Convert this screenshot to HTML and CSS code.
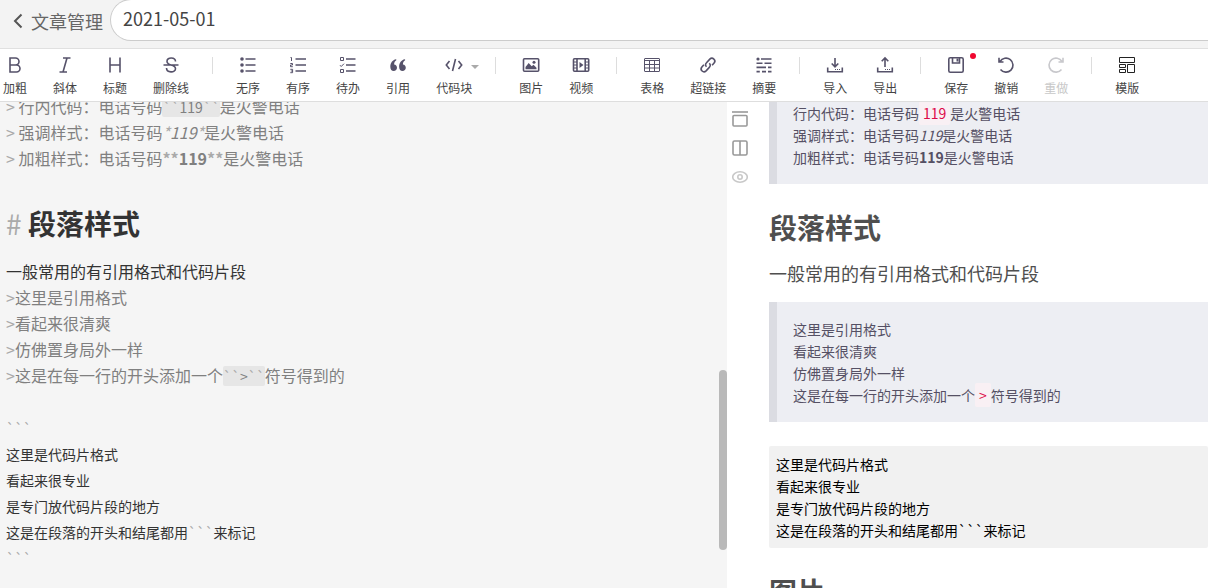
FILE: index.html
```html
<!DOCTYPE html>
<html lang="zh-CN">
<head>
<meta charset="utf-8">
<title>2021-05-01</title>
<link rel="stylesheet" href="styles.css">
</head>
<body>
<header class="topbar">
  <a class="back" href="#"><svg class="back-icon" viewBox="0 0 10 16"><path d="M8.500 1.500 2 8l6.500 6.500"/></svg>文章管理</a>
  <input class="title-input" type="text" value="2021-05-01" aria-label="文章标题">
</header>

<nav class="toolbar">
  <button class="tool"><svg class="icon" viewBox="0 0 20 20"><path d="M5 3v14h6.500a3.500 3.500 0 0 0 0-7H5h5.500a3.500 3.500 0 0 0 0-7z"/></svg>加粗</button>
  <button class="tool"><svg class="icon" viewBox="0 0 20 20"><path d="M8 3h7.500M4.500 17H12M12 3 8 17"/></svg>斜体</button>
  <button class="tool"><svg class="icon" viewBox="0 0 20 20"><path d="M5 2.500v15M15 2.500v15M5 10h10"/></svg>标题</button>
  <button class="tool"><svg class="icon" viewBox="0 0 20 20"><path d="M2.500 10h15M14.500 6.500C14.500 1.800 6 1.800 6 6.200 6 8.500 8 9.300 10 10c2.500.7 4.500 1.500 4.500 3.700 0 4.400-9 4.400-9-.7"/></svg>删除线</button>
  <span class="divider"></span>
  <button class="tool"><svg class="icon" viewBox="0 0 20 20"><path d="M7.500 4H17.500M7.500 10H17.500M7.500 16H17.500"/><g class="solid"><circle cx="4" cy="4" r="1.800"/><circle cx="4" cy="10" r="1.800"/><circle cx="4" cy="16" r="1.800"/></g></svg>无序</button>
  <button class="tool"><svg class="icon" viewBox="0 0 20 20"><path d="M7.500 4H18M7.500 10H18M7.500 16H18"/><path class="fine" d="M2.500 2.500h1V6M2.300 8.500h2.200V10H2.500v1.700h2.300M2.300 14.300h2.300v3.400H2.300M2.800 16h1.800"/></svg>有序</button>
  <button class="tool"><svg class="icon" viewBox="0 0 20 20"><path d="M8 4h9.500M8 10h9.500M8 16h9.500"/><path class="fine" d="M2.500 2.500h3v3h-3zM2.500 14.500h3v3h-3zM2 10.200l1.200 1.300L6 8.700"/></svg>待办</button>
  <button class="tool"><svg class="icon" viewBox="0 0 20 20"><path class="solid" d="M8 4.200C4.500 4.800 2.300 8 2.300 11.700c0 2.700 1.400 4.300 3.400 4.300 1.900 0 3.300-1.400 3.300-3.300 0-1.800-1.200-3.100-2.900-3.200C6.200 7.200 6.900 6.200 8.500 5zM16.800 4.200c-3.500.6-5.700 3.800-5.700 7.500 0 2.700 1.400 4.300 3.400 4.300 1.900 0 3.300-1.400 3.300-3.300 0-1.800-1.200-3.100-2.900-3.200.1-2.300.8-3.300 2.400-4.500z"/></svg>引用</button>
  <button class="tool"><svg class="icon" viewBox="0 0 20 20"><path d="M5.500 6 2.300 10l3.200 4M14.500 6l3.200 4-3.200 4M11.500 4l-3 12"/></svg>代码块<svg class="caret" viewBox="0 0 8 4"><path d="M0 0h8L4 4z"/></svg></button>
  <span class="divider"></span>
  <button class="tool"><svg class="icon" viewBox="0 0 20 20"><rect x="2.500" y="3.700" width="15.200" height="12.600" rx="1"/><path class="solid" d="M4.500 14.300V12l3.200-4 3 3.300 1.800-1.500 3 3v1.500z"/><circle class="solid" cx="13" cy="7.300" r="1.500"/></svg>图片</button>
  <button class="tool"><svg class="icon" viewBox="0 0 20 20"><rect x="2.500" y="3.700" width="15.200" height="12.600" rx="1"/><path d="M6 4v12M14.200 4v12"/><path class="fine" d="M2.500 7H6M2.500 10H6M2.500 13H6M14.200 7h3.500M14.200 10h3.500M14.200 13h3.500"/><path class="solid" d="M8.500 7v6l4-3z"/></svg>视频</button>
  <span class="divider"></span>
  <button class="tool"><svg class="icon" viewBox="0 0 20 20"><path class="fine" d="M3 3.500h14q.5 0 .5.500v12q0 .5-.5.500H3q-.5 0-.5-.5V4q0-.5.500-.500zM2.500 5.500h15M2.500 9.500h15M2.500 13h15M7.500 5.500v11M12.500 5.500v11"/></svg>表格</button>
  <button class="tool"><svg class="icon" viewBox="0 0 20 20"><path d="M8.500 11.800c-1.300-1.300-1.300-2.800 0-4.100l3.300-3.600c2.700-2.500 6.700 1.100 4.300 3.900l-2 2.300M11.300 8.300c1.300 1.300 1.300 2.800 0 4.100l-3.200 3.500c-2.700 2.500-6.600-1-4.200-3.900l2-2.300"/></svg>超链接</button>
  <button class="tool"><svg class="icon" viewBox="0 0 20 20"><path d="M7 4h10.500M2.500 8.200h6M10.500 8.200h7M2.500 12.400h9.500M14 12.400h3.500M2.500 16.600h3.300M8 16.600h4M14 16.600h3.500"/><circle class="solid" cx="4" cy="4" r="1.600"/></svg>摘要</button>
  <span class="divider"></span>
  <button class="tool"><svg class="icon" viewBox="0 0 20 20"><path d="M10 3v8.500M6.700 8.500 10 11.800l3.300-3.300M2.700 12.500v4.200h14.600v-4.200"/><path class="fine" d="M10 14.500h1M12 14.500h1M14 14.500h1"/></svg>导入</button>
  <button class="tool"><svg class="icon" viewBox="0 0 20 20"><path d="M10 12V3M6.700 6.300 10 3l3.300 3.300M2.700 12.500v4.200h14.600v-4.200"/><path class="fine" d="M10 14.500h1M12 14.500h1M14 14.500h1"/></svg>导出</button>
  <span class="divider"></span>
  <button class="tool"><svg class="icon" viewBox="0 0 20 20"><rect x="2.800" y="2.800" width="14.400" height="14.400" rx="1.500"/><path d="M6.500 3v5h7V3"/><path class="solid" d="M10.500 3.500h2v3h-2z"/></svg>保存<span class="unsaved"></span></button>
  <button class="tool"><svg class="icon" viewBox="0 0 20 20"><path d="M4 6.500a7 7 0 1 1 .5 8M3 2.800V7h4.500"/></svg>撤销</button>
  <button class="tool" disabled><svg class="icon" viewBox="0 0 20 20"><path d="M16 6.500a7 7 0 1 0-.5 8M17 2.800V7h-4.500"/></svg>重做</button>
  <span class="divider"></span>
  <button class="tool"><svg class="icon template" viewBox="0 0 20 20"><path d="M2.500 2.500h15v5h-15zM2.500 9.500h6v3h-6zM2.500 14.500h6v3h-6zM10.500 9.500h7v8h-7z"/></svg>模版</button>
</nav>

<main class="workspace">
  <section class="editor">
    <div class="source" contenteditable="true" spellcheck="false">
      <div class="line quote"><i class="mark">&gt;</i> 行内代码：电话号码<code class="source-code"><i class="mark">``</i>119<i class="mark">``</i></code>是火警电话</div>
      <div class="line quote"><i class="mark">&gt;</i> 强调样式：电话号码<em><i class="mark">*</i>119<i class="mark">*</i></em>是火警电话</div>
      <div class="line quote"><i class="mark">&gt;</i> 加粗样式：电话号码<strong><i class="mark">**</i>119<i class="mark">**</i></strong>是火警电话</div>
      <div class="line"></div>
      <div class="line source-heading"><i class="mark">#</i> 段落样式</div>
      <div class="line">一般常用的有引用格式和代码片段</div>
      <div class="line quote"><i class="mark">&gt;</i>这里是引用格式</div>
      <div class="line quote"><i class="mark">&gt;</i>看起来很清爽</div>
      <div class="line quote"><i class="mark">&gt;</i>仿佛置身局外一样</div>
      <div class="line quote"><i class="mark">&gt;</i>这是在每一行的开头添加一个<code class="source-code"><i class="mark">``</i>&gt;<i class="mark">``</i></code>符号得到的</div>
      <div class="line"></div>
      <div class="fence">
        <div class="line"><i class="mark">```</i></div>
        <div class="line">这里是代码片格式</div>
        <div class="line">看起来很专业</div>
        <div class="line">是专门放代码片段的地方</div>
        <div class="line">这是在段落的开头和结尾都用<i class="mark">```</i>来标记</div>
        <div class="line"><i class="mark">```</i></div>
      </div>
    </div>
    <span class="scroll-thumb"></span>
  </section>
  <aside class="view-modes">
    <button class="mode" aria-label="目录"><svg viewBox="0 0 16 16"><path d="M0 1h16"/><rect x="1" y="4.500" width="14" height="10.500" rx="1"/></svg></button>
    <button class="mode" aria-label="分栏"><svg viewBox="0 0 16 16"><rect x="1" y="1" width="14" height="14" rx="1.500"/><path d="M8 1v14"/></svg></button>
    <button class="mode faint" aria-label="预览"><svg viewBox="0 0 16 16"><ellipse cx="8" cy="8" rx="7.300" ry="5.200"/><circle cx="8" cy="8" r="2.200"/></svg></button>
  </aside>
  <article class="preview">
    <blockquote class="preview-quote first">行内代码：电话号码<code class="inline-code">119</code>是火警电话<br>强调样式：电话号码<em>119</em>是火警电话<br>加粗样式：电话号码<strong>119</strong>是火警电话</blockquote>
    <h1 class="preview-heading">段落样式</h1>
    <p class="preview-text">一般常用的有引用格式和代码片段</p>
    <blockquote class="preview-quote">这里是引用格式<br>看起来很清爽<br>仿佛置身局外一样<br>这是在每一行的开头添加一个<code class="inline-code">&gt;</code>符号得到的</blockquote>
    <pre class="preview-code">这里是代码片格式
看起来很专业
是专门放代码片段的地方
这是在段落的开头和结尾都用```来标记</pre>
    <h1 class="preview-heading">图片</h1>
  </article>
</main>
</body>
</html>
```

FILE: styles.css
```css
* { box-sizing: border-box; }

body {
  display: flex;
  flex-direction: column;
  height: 100vh;
  margin: 0;
  overflow: hidden;
  background: #fff;
  color: #333;
  font-family: "Noto Sans CJK SC", sans-serif;
}

button, input, code, pre { font-family: inherit; }

.topbar {
  display: flex;
  flex: none;
  align-items: flex-start;
  height: 48px;
  background: #f3f3f3;
}

.back {
  display: flex;
  align-items: center;
  gap: 8px;
  padding: 8px 7px 0 13px;
  color: #666;
  font-size: 18px;
  line-height: 26px;
  text-decoration: none;
}

.back-icon {
  width: 10px;
  height: 16px;
  fill: none;
  stroke: #555;
  stroke-width: 2;
}

.title-input {
  flex: 1;
  min-width: 0;
  height: 42px;
  margin-top: -1px;
  padding: 0 12px 4px;
  border: 1px solid #ccc;
  border-right: 0;
  border-radius: 21px 0 0 21px;
  background: #fff;
  color: #444;
  font-size: 18px;
  outline: none;
}

.toolbar {
  display: flex;
  flex: none;
  height: 54px;
  border-top: 1px solid #e0e0e0;
  border-bottom: 1px solid #dedede;
  background: #fff;
}

.tool {
  position: relative;
  display: flex;
  flex: none;
  flex-direction: column;
  align-items: center;
  gap: 4px;
  padding: 6px 13px 0;
  border: 0;
  background: none;
  color: #444;
  font-size: 12px;
  line-height: 18px;
}

.tool:first-child { padding-left: 3px; }
.tool:disabled { color: #c8c8c8; }

.icon {
  width: 20px;
  height: 20px;
  fill: none;
  stroke: #56526a;
  stroke-width: 1.6;
}

.icon .fine { stroke-width: 1; }
.icon .solid { fill: #56526a; stroke: none; }
.tool:disabled .icon { stroke: #c8c8cc; }
.icon.template { stroke: #222; stroke-width: 1; }

.caret {
  position: absolute;
  top: 16px;
  right: 6px;
  width: 8px;
  height: 4px;
  fill: #aaa;
}

.unsaved {
  position: absolute;
  top: 4px;
  right: 5px;
  width: 6px;
  height: 6px;
  border-radius: 50%;
  background: #f00830;
}

.divider {
  flex: none;
  width: 1px;
  height: 17px;
  margin: 8px 10px;
  background: #ddd;
}

.workspace {
  display: grid;
  flex: 1;
  grid-template-columns: 727fr 42px 439fr;
  min-height: 0;
}

.editor {
  position: relative;
  overflow: hidden;
  background: #f5f5f5;
}

.source {
  margin-top: -9px;
  padding: 0 6px;
  font-size: 16px;
  outline: none;
}

.line { height: 26px; line-height: 26px; white-space: nowrap; }
.quote { color: #808080; }
.mark { color: #aaa; font-style: inherit; }

.fence {
  margin-top: 1px;
  font-size: 14px;
}

.source-code {
  border-radius: 2px;
  background: #e6e6e6;
  font-size: 14px;
  line-height: 16px;
}

.source-heading {
  height: 52px;
  margin-bottom: 9px;
  font-size: 28px;
  font-weight: 700;
  line-height: 52px;
}

.source-heading .mark { font-weight: 400; }

.scroll-thumb {
  position: absolute;
  top: 268px;
  right: 0;
  width: 8px;
  height: 180px;
  border-radius: 4px;
  background: #b9b9b9;
}

.view-modes {
  display: flex;
  flex-direction: column;
  gap: 13px;
  padding: 9px 5px;
}

.mode {
  display: flex;
  width: 16px;
  height: 16px;
  padding: 0;
  border: 0;
  background: none;
}

.mode svg {
  width: 16px;
  height: 16px;
  fill: none;
  stroke: #999;
  stroke-width: 1.6;
}

.mode.faint svg { stroke: #c8c8c8; }

.preview { overflow: hidden; }

.preview-quote {
  margin: 0 0 24px;
  padding: 16px;
  border-left: 8px solid #dbdce2;
  background: #edeef3;
  color: #555064;
  font-size: 14px;
  line-height: 22px;
}

.preview-quote.first { padding-top: 0; }

.inline-code {
  padding: 2px 4px;
  border-radius: 2px;
  background: #f9f0f4;
  color: #dd0a49;
  font-size: 14px;
}

.preview-heading {
  margin: 0 0 13px;
  color: #4f4f4f;
  font-size: 28px;
  font-weight: 700;
  line-height: 38px;
}

.preview-text {
  margin: 0 0 15px;
  color: #4f4f4f;
  font-size: 18px;
  line-height: 28px;
}

.preview-code {
  margin: 0 0 24px;
  padding: 7px;
  border-radius: 2px;
  background: #f1f1f1;
  color: #000;
  font-size: 14px;
  line-height: 22px;
}
```
